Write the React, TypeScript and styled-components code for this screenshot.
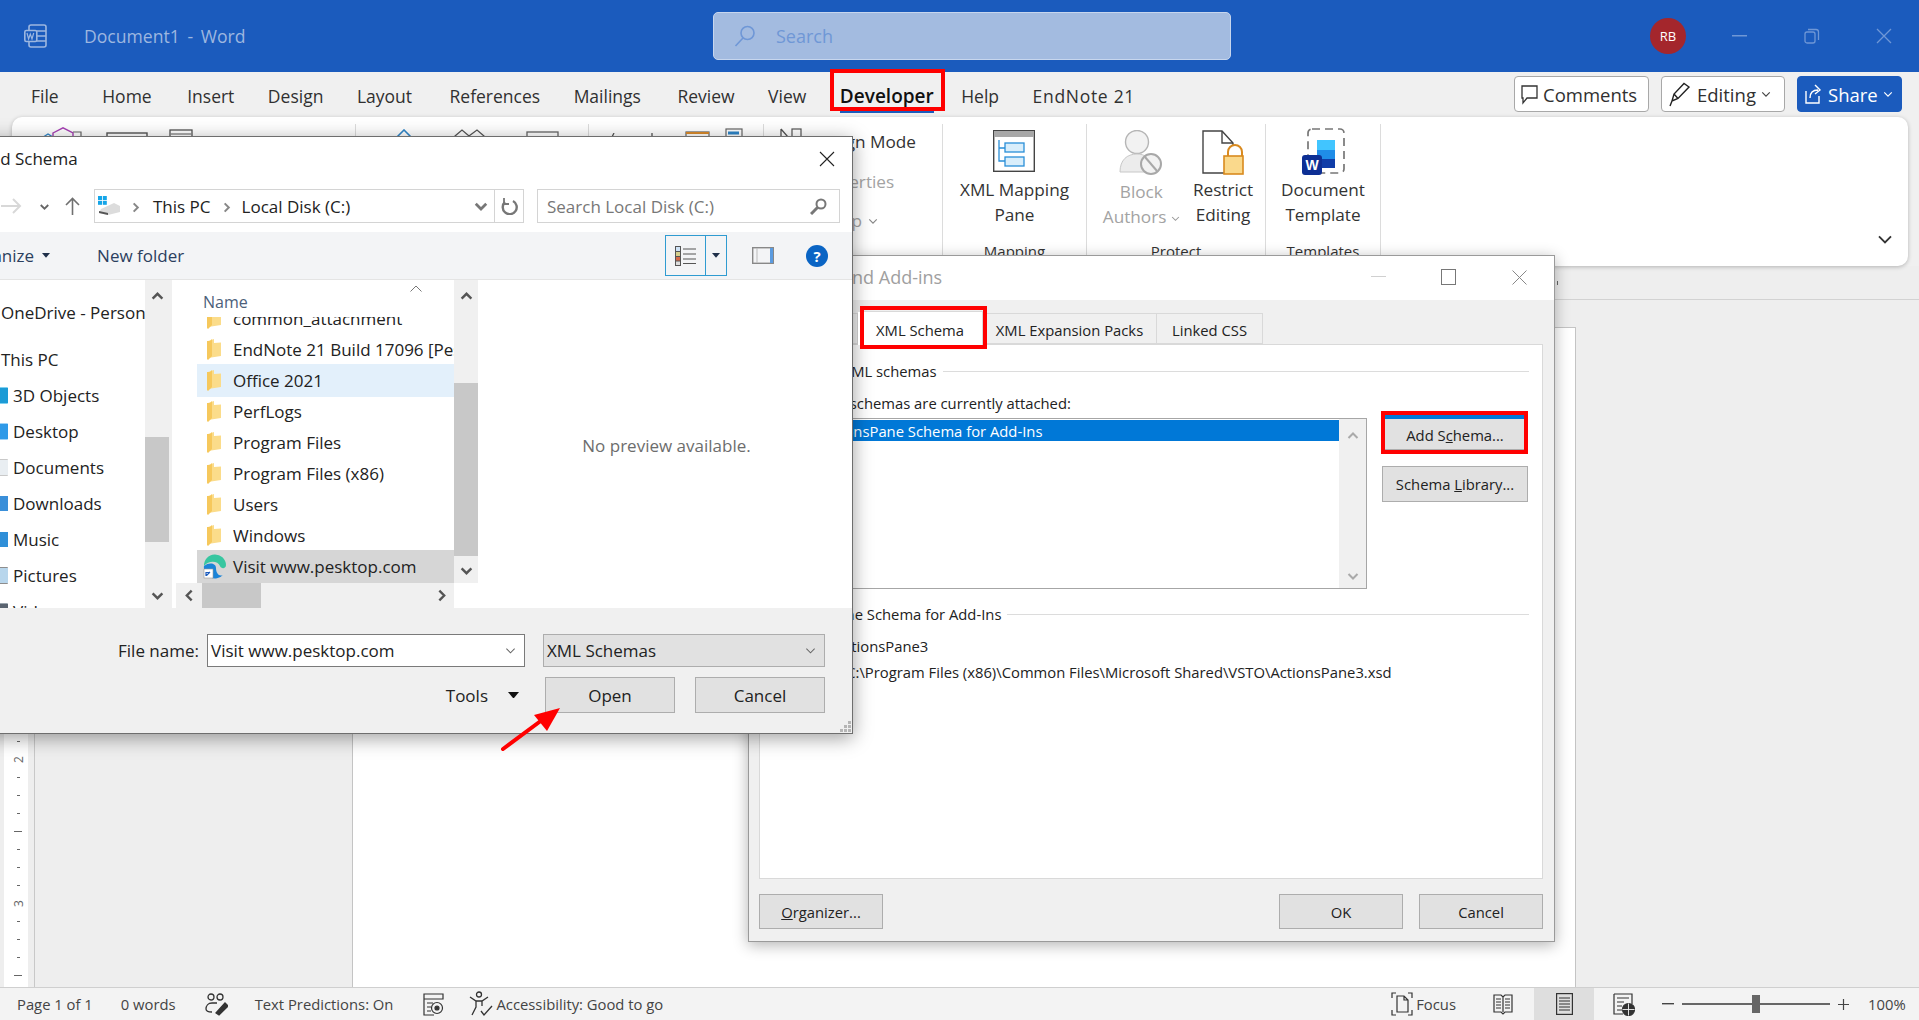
import React from "react";
import styled, { createGlobalStyle } from "styled-components";

const GlobalStyle = createGlobalStyle`
  html, body {
    margin: 0;
    padding: 0;
    background: #eeeeee;
    font-family: "Open Sans", "Noto Sans", sans-serif;
  }
  * { box-sizing: border-box; }
`;

const Screen = styled.div`
  position: relative;
  width: 1919px;
  height: 1020px;
  overflow: hidden;
  display: flex;
  flex-direction: column;
  color: #262626;
`;

/* ---------- title bar ---------- */

const TitleBar = styled.div`
  height: 72px;
  flex: none;
  background: #1b5bbd;
  display: flex;
  align-items: center;
  color: #9db7e0;
`;

const TitleLeft = styled.div`
  width: 713px;
  display: flex;
  align-items: center;
  padding-left: 24px;
  gap: 37px;
  font-size: 17.6px;
`;

const TitleText = styled.span`
  word-spacing: 3px;
`;

const SearchBox = styled.div`
  width: 518px;
  height: 48px;
  background: #a3bbe0;
  border: 1px solid #c7d6ee;
  border-radius: 5px;
  display: flex;
  align-items: center;
  padding-left: 20px;
  gap: 20px;
  font-size: 18px;
  color: #6f97d6;
`;

const TitleRight = styled.div`
  margin-left: auto;
  padding-right: 27px;
  display: flex;
  align-items: center;
`;

const Avatar = styled.div`
  width: 36px;
  height: 36px;
  border-radius: 50%;
  background: #a4262c;
  color: #fff;
  font-size: 13px;
  display: flex;
  align-items: center;
  justify-content: center;
  margin-right: 46px;
`;

const WinGlyph = styled.svg<{ $ml?: number }>`
  display: block;
  margin-left: ${(p) => p.$ml ?? 0}px;
`;

/* ---------- tabs ---------- */

const RibbonArea = styled.div`
  flex: none;
  background: #f0f0f0;
  height: 194px;
`;

const TabsBar = styled.div`
  height: 45px;
  display: flex;
  align-items: flex-start;
  padding-left: 31px;
  padding-right: 17px;
`;

const MenuTabs = styled.div`
  display: flex;
  gap: 33.5px;
  padding-top: 9px;
`;

const MenuTab = styled.div<{ $active?: boolean; $extra?: number; $track?: number }>`
  position: relative;
  height: 30px;
  line-height: 30px;
  font-size: ${(p) => (p.$active ? 19 : 17.5)}px;
  margin-right: ${(p) => p.$extra ?? 0}px;
  letter-spacing: ${(p) => p.$track ?? 0}px;
  font-weight: ${(p) => (p.$active ? 600 : 400)};
  color: ${(p) => (p.$active ? "#111" : "#303030")};
  white-space: nowrap;
  ${(p) =>
    p.$active &&
    `
    &::before {
      content: "";
      position: absolute;
      left: 0;
      right: 0;
      bottom: -2px;
      height: 3px;
      background: #1b5bbd;
    }
    &::after {
      content: "";
      position: absolute;
      left: -10px;
      right: -11px;
      top: -12px;
      bottom: 0;
      border: 4px solid #f00;
    }
  `}
`;

const ActionGroup = styled.div`
  margin-left: auto;
  display: flex;
  gap: 12px;
  padding-top: 4px;
`;

const ActionButton = styled.div<{ $w: number; $primary?: boolean }>`
  width: ${(p) => p.$w}px;
  height: 36px;
  border-radius: 4px;
  display: flex;
  align-items: center;
  padding-left: 6px;
  gap: 5px;
  font-size: 18.5px;
  background: ${(p) => (p.$primary ? "#1b5bbd" : "#fff")};
  color: ${(p) => (p.$primary ? "#fff" : "#303030")};
  border: 1px solid ${(p) => (p.$primary ? "#1b5bbd" : "#a8a8a8")};
`;

/* ---------- ribbon ---------- */

const Ribbon = styled.div`
  position: relative;
  margin: 0 11px 0 12px;
  height: 149px;
  background: #fff;
  border-radius: 10px;
  box-shadow: 0 1px 4px rgba(0, 0, 0, 0.25);
  display: flex;
  padding-top: 7px;
  font-size: 17.2px;
  color: #333;
`;

const RibbonGroup = styled.div<{ $w: number }>`
  width: ${(p) => p.$w}px;
  height: 138px;
  flex: none;
  border-right: 1px solid #dcdcdc;
  display: flex;
  flex-direction: column;
`;

const IconStrip = styled.div<{ $pl: number }>`
  display: flex;
  align-items: flex-start;
  padding-top: 3px;
  padding-left: ${(p) => p.$pl}px;
`;

const StripIcon = styled.svg<{ $ml?: number; $mt?: number }>`
  display: block;
  flex: none;
  margin-left: ${(p) => p.$ml ?? 0}px;
  margin-top: ${(p) => p.$mt ?? 0}px;
`;

const StripText = styled.span`
  margin-left: 8px;
  margin-top: 3px;
  line-height: 24px;
  white-space: nowrap;
`;

const ControlRows = styled.div`
  padding-left: 47px;
  display: flex;
  flex-direction: column;
  margin-top: 7px;
`;

const ControlRow = styled.div<{ $muted?: boolean }>`
  height: 39px;
  line-height: 39px;
  white-space: nowrap;
  display: flex;
  align-items: center;
  gap: 6px;
  color: ${(p) => (p.$muted ? "#a3a3a3" : "#333")};
`;

const LargeButtons = styled.div<{ $gap?: number; $pl?: number }>`
  display: flex;
  justify-content: center;
  gap: ${(p) => p.$gap ?? 0}px;
  padding-left: ${(p) => p.$pl ?? 0}px;
`;

const LargeButton = styled.div<{ $muted?: boolean }>`
  display: flex;
  flex-direction: column;
  align-items: center;
  text-align: center;
  line-height: 24.5px;
  white-space: nowrap;
  padding-top: 6px;
  color: ${(p) => (p.$muted ? "#a3a3a3" : "#333")};
`;

const LargeLabel = styled.div<{ $gap: number }>`
  margin-top: ${(p) => p.$gap}px;
`;

const GroupLabel = styled.div`
  margin-top: auto;
  text-align: center;
  line-height: 22px;
  font-size: 15px;
`;

const CollapseBtn = styled.div`
  position: absolute;
  right: 15px;
  bottom: 14px;
`;

/* ---------- workspace ---------- */

const Workspace = styled.div`
  flex: 1;
  min-height: 0;
  display: flex;
  flex-direction: column;
  background: #eeeeee;
`;

const HRuler = styled.div`
  height: 34px;
  flex: none;
  border-bottom: 1px solid #d2d2d2;
  display: flex;
  justify-content: flex-end;
  align-items: center;
  padding-right: 361px;
`;

const HTick = styled.div`
  width: 1px;
  height: 4px;
  background: #666;
`;

const DocRow = styled.div`
  flex: 1;
  min-height: 0;
  display: flex;
`;

const VRuler = styled.div`
  width: 24px;
  margin-left: 4px;
  background: #fff;
  display: flex;
  flex-direction: column-reverse;
  padding-bottom: 3px;
  padding-left: 4px;
  overflow: hidden;
  flex: none;
`;

const RulerMark = styled.div`
  height: 18px;
  flex: none;
  display: flex;
  align-items: center;
  justify-content: center;
  font-size: 12px;
  color: #666;
`;

const RulerDigit = styled.span`
  display: block;
  transform: rotate(-90deg);
`;

const RulerTick = styled.div<{ $long?: boolean }>`
  width: ${(p) => (p.$long ? 8 : 3)}px;
  height: 1px;
  background: #666;
`;

const PageGutter = styled.div`
  flex: 1;
  margin-left: 6px;
  border-left: 1px solid #c8c8c8;
  padding: 27px 343px 0 317px;
  display: flex;
`;

const Page = styled.div`
  flex: 1;
  background: #fff;
  border: 1px solid #c4c4c4;
  border-bottom: none;
`;

/* ---------- status bar ---------- */

const StatusBar = styled.div`
  height: 33px;
  flex: none;
  background: #f3f3f3;
  border-top: 1px solid #cfcfcf;
  display: flex;
  align-items: center;
  font-size: 14.8px;
  color: #444;
`;

const StatusItem = styled.div<{ $x: number }>`
  margin-left: ${(p) => p.$x}px;
  display: flex;
  align-items: center;
  white-space: nowrap;
  height: 100%;
`;

const StatusLabel = styled.span`
  margin-left: 3px;
`;

const StatusView = styled.div<{ $x: number; $on?: boolean }>`
  margin-left: ${(p) => p.$x}px;
  width: 60px;
  height: 100%;
  display: flex;
  align-items: center;
  justify-content: center;
  background: ${(p) => (p.$on ? "#dedede" : "transparent")};
`;

const ZoomSlider = styled.div`
  position: relative;
  width: 148px;
  height: 2px;
  background: #666;
  margin-left: 8px;
  margin-right: 8px;
`;

const ZoomThumb = styled.div`
  position: absolute;
  left: 70px;
  top: -8px;
  width: 8px;
  height: 18px;
  background: #666;
`;

/* ---------- dialogs ---------- */

const AddInsWindow = styled.div`
  position: absolute;
  left: 748px;
  top: 255px;
  width: 807px;
  height: 687px;
  background: #fff;
  border: 1px solid #9a9a9a;
  box-shadow: 0 3px 14px rgba(0, 0, 0, 0.3);
  display: flex;
  flex-direction: column;
`;

const AddInsTitle = styled.div`
  height: 44px;
  flex: none;
  display: flex;
  align-items: center;
  padding: 0 27px 2px 1px;
  font-size: 18px;
  color: #a0a0a0;
  white-space: nowrap;
`;

const TitleControls = styled.div`
  margin-left: auto;
  display: flex;
  align-items: center;
`;

const AddInsBody = styled.div`
  flex: 1;
  background: #f0f0f0;
  padding: 0 11px 0 10px;
  display: flex;
  flex-direction: column;
  font-size: 14.8px;
  color: #222;
`;

const DialogTabs = styled.div`
  height: 44px;
  flex: none;
  display: flex;
  align-items: flex-end;
`;

const DialogTab = styled.div<{ $w: number; $active?: boolean }>`
  position: relative;
  width: ${(p) => p.$w}px;
  height: ${(p) => (p.$active ? 34 : 31)}px;
  margin-bottom: ${(p) => (p.$active ? -1 : 0)}px;
  padding-top: 2px;
  z-index: ${(p) => (p.$active ? 1 : 0)};
  display: flex;
  align-items: center;
  justify-content: center;
  background: ${(p) => (p.$active ? "#fff" : "#f0f0f0")};
  border: 1px solid #d9d9d9;
  border-left: none;
  ${(p) => p.$active && "border-bottom: none;"}
  ${(p) =>
    p.$active &&
    `
    &::after {
      content: "";
      position: absolute;
      left: 2px;
      right: -5px;
      top: -6px;
      bottom: -4px;
      border: 4px solid #f00;
    }
  `}
`;

const TabPanel = styled.div`
  height: 535px;
  flex: none;
  background: #fff;
  border: 1px solid #d9d9d9;
  padding: 15px 13px 0 15px;
`;

const Legend = styled.div<{ $mt?: number; $pl?: number }>`
  display: flex;
  align-items: center;
  gap: 6px;
  height: 22px;
  white-space: nowrap;
  margin-top: ${(p) => p.$mt ?? 0}px;
  padding-left: ${(p) => p.$pl ?? 0}px;
`;

const LegendLine = styled.div`
  flex: 1;
  height: 1px;
  background: #dcdcdc;
`;

const PlainLine = styled.div<{ $mt: number; $pl?: number }>`
  height: 22px;
  line-height: 22px;
  margin-top: ${(p) => p.$mt}px;
  padding-left: ${(p) => p.$pl ?? 0}px;
  white-space: nowrap;
`;

const SchemaRow = styled.div`
  display: flex;
  margin-top: 4px;
  height: 171px;
`;

const SchemaList = styled.div`
  width: 589px;
  margin-left: 3px;
  border: 1px solid #a6a6a6;
  display: flex;
  padding-top: 1px;
  flex: none;
`;

const SchemaItems = styled.div`
  flex: 1;
`;

const SchemaItem = styled.div`
  height: 21px;
  line-height: 22px;
  background: #0078d7;
  color: #fff;
  padding-left: 40px;
  white-space: nowrap;
`;

const SchemaScroll = styled.div`
  width: 27px;
  flex: none;
  background: #f0f0f0;
  margin-top: -1px;
  display: flex;
  flex-direction: column;
  align-items: center;
  justify-content: space-between;
  padding: 11px 0 6px;
`;

const SchemaActions = styled.div`
  margin-left: 15px;
  margin-top: -3px;
  display: flex;
  flex-direction: column;
  gap: 16px;
`;

const DlgButton = styled.div<{ $w: number; $h?: number; $outlined?: boolean }>`
  position: relative;
  width: ${(p) => p.$w}px;
  height: ${(p) => p.$h ?? 35}px;
  display: flex;
  align-items: center;
  justify-content: center;
  background: #e1e1e1;
  border: 1px solid #adadad;
  color: #222;
  white-space: nowrap;
  ${(p) =>
    p.$outlined &&
    `
    border-top: 4px solid #0078d7;
    padding-top: 1px;
    &::after {
      content: "";
      position: absolute;
      left: -2px;
      right: -1px;
      top: -8px;
      bottom: -5px;
      border: 4px solid #f00;
    }
  `}
`;

const DialogFooter = styled.div`
  margin-top: 15px;
  display: flex;
  justify-content: space-between;
`;

const FooterRight = styled.div`
  display: flex;
  gap: 16px;
`;

const FileWindow = styled.div`
  position: absolute;
  left: -40px;
  top: 136px;
  width: 893px;
  height: 598px;
  background: #fff;
  border: 1px solid #6e6e6e;
  box-shadow: 0 4px 18px rgba(0, 0, 0, 0.38);
  display: flex;
  flex-direction: column;
  font-size: 17px;
  color: #222;
`;

const FileTitle = styled.div`
  height: 52px;
  flex: none;
  display: flex;
  align-items: center;
  justify-content: space-between;
  padding: 0 17px 9px 18px;
  font-size: 17px;
`;

const AddressRow = styled.div`
  height: 43px;
  flex: none;
  display: flex;
  align-items: flex-start;
  padding-left: 40px;
`;

const NavButtons = styled.div`
  width: 93px;
  height: 34px;
  display: flex;
  align-items: center;
  gap: 16px;
`;

const AddressBox = styled.div`
  width: 430px;
  height: 34px;
  border: 1px solid #d4d4d4;
  display: flex;
  align-items: center;
  padding-left: 3px;
`;

const Crumb = styled.span<{ $ml: number }>`
  margin-left: ${(p) => p.$ml}px;
  white-space: nowrap;
`;

const AddressDrop = styled.span`
  margin-left: auto;
  margin-right: 6px;
`;

const RefreshCell = styled.div`
  width: 29px;
  height: 100%;
  border-left: 1px solid #d4d4d4;
  display: flex;
  align-items: center;
  justify-content: center;
`;

const SearchField = styled.div`
  width: 303px;
  height: 34px;
  margin-left: 13px;
  border: 1px solid #d4d4d4;
  display: flex;
  align-items: center;
  justify-content: space-between;
  padding: 0 12px 0 9px;
  color: #777;
`;

const CommandBar = styled.div`
  height: 48px;
  flex: none;
  background: #f3f4f6;
  border-bottom: 1px solid #e4e4e4;
  display: flex;
  align-items: center;
  padding-left: 2px;
  color: #2b3f5e;
`;

const CommandCaret = styled.span`
  margin-left: 8px;
  display: flex;
`;

const NewFolder = styled.span`
  margin-left: 47px;
`;

const ViewSwitch = styled.div`
  width: 62px;
  height: 41px;
  margin-left: auto;
  border: 1px solid #2f9bd1;
  display: flex;
`;

const ViewCell = styled.div<{ $w: number; $split?: boolean }>`
  width: ${(p) => p.$w}px;
  display: flex;
  align-items: center;
  justify-content: center;
  ${(p) => p.$split && "border-left: 1px solid #2f9bd1;"}
`;

const PreviewToggle = styled.svg`
  margin-left: 25px;
`;

const HelpDot = styled.div`
  width: 22px;
  height: 22px;
  border-radius: 50%;
  background: #0a64c4;
  color: #fff;
  font-size: 15px;
  font-weight: 700;
  display: flex;
  align-items: center;
  justify-content: center;
  margin-left: 32px;
  margin-right: 24px;
`;

const Browser = styled.div`
  height: 328px;
  flex: none;
  display: flex;
`;

const NavPane = styled.div`
  width: 184px;
  flex: none;
  overflow: hidden;
  padding-top: 14px;
`;

const NavRow = styled.div<{ $mb?: number; $pl: number }>`
  height: 36px;
  display: flex;
  align-items: center;
  gap: 5px;
  white-space: nowrap;
  padding-left: ${(p) => p.$pl}px;
  margin-bottom: ${(p) => p.$mb ?? 0}px;
`;

const VScroll = styled.div`
  width: 24px;
  flex: none;
  background: #f0f0f0;
  display: flex;
  flex-direction: column;
  align-items: center;
`;

const ScrollThumb = styled.div<{ $mt: number; $h: number }>`
  width: 100%;
  height: ${(p) => p.$h}px;
  margin-top: ${(p) => p.$mt}px;
  background: #c8c8c8;
  flex: none;
`;

const ScrollEnd = styled.div<{ $h: number; $auto?: boolean }>`
  height: ${(p) => p.$h}px;
  flex: none;
  display: flex;
  align-items: center;
  justify-content: center;
  ${(p) => p.$auto && "margin-top: auto;"}
`;

const PaneGap = styled.div`
  width: 5px;
  flex: none;
  border-left: 3px solid #f0f0f0;
`;

const ListPane = styled.div`
  width: 307px;
  flex: none;
  display: flex;
  flex-direction: column;
`;

const ListMain = styled.div`
  height: 303px;
  flex: none;
  display: flex;
`;

const FileColumn = styled.div`
  width: 280px;
  flex: none;
  display: flex;
  flex-direction: column;
  overflow: hidden;
`;

const ColumnHead = styled.div`
  height: 37px;
  flex: none;
  display: flex;
  justify-content: space-between;
  padding: 6px 32px 0 29px;
  color: #4c607a;
  font-size: 16px;
  line-height: 32px;
  position: relative;
  z-index: 1;
  background: #fff;
`;

const SortCaret = styled.svg`
  margin-top: -1px;
`;

const FileRows = styled.div`
  flex: 1;
  margin-top: -14px;
  padding-left: 23px;
`;

const FileRow = styled.div<{ $bg?: string }>`
  height: 31px;
  display: flex;
  align-items: center;
  padding-left: 10px;
  gap: 12px;
  white-space: nowrap;
  overflow: hidden;
  background: ${(p) => p.$bg ?? "transparent"};
  box-shadow: ${(p) =>
    p.$bg ? `0 -1px 0 ${p.$bg}, 0 1px 0 ${p.$bg}` : "none"};
`;

const EdgeRowIcon = styled.svg`
  margin-left: -4px;
  margin-right: -6px;
  flex: none;
`;

const HScroll = styled.div`
  height: 25px;
  flex: none;
  margin-left: 2px;
  width: 278px;
  background: #f0f0f0;
  display: flex;
  align-items: center;
`;

const HEnd = styled.div<{ $w: number; $auto?: boolean }>`
  width: ${(p) => p.$w}px;
  height: 100%;
  display: flex;
  align-items: center;
  justify-content: center;
  ${(p) => p.$auto && "margin-left: auto;"}
`;

const HThumb = styled.div`
  width: 59px;
  height: 100%;
  background: #c8c8c8;
`;

const PreviewPane = styled.div`
  flex: 1;
  display: flex;
  align-items: center;
  justify-content: center;
  color: #6d6d6d;
  padding-top: 2px;
`;

const FileFooter = styled.div`
  position: relative;
  flex: 1;
  background: #f0f0f0;
  padding: 26px 27px 0 0;
  display: flex;
  flex-direction: column;
  align-items: flex-end;
`;

const FormRow = styled.div`
  display: flex;
  align-items: center;
`;

const FormLabel = styled.span`
  margin-right: 8px;
`;

const ComboBox = styled.div<{ $w: number; $select?: boolean }>`
  width: ${(p) => p.$w}px;
  height: 33px;
  display: flex;
  align-items: center;
  justify-content: space-between;
  padding: 0 8px 0 3px;
  background: ${(p) => (p.$select ? "#e1e1e1" : "#fff")};
  border: 1px solid ${(p) => (p.$select ? "#adadad" : "#7a7a7a")};
  margin-left: ${(p) => (p.$select ? 18 : 0)}px;
`;

const ButtonRow = styled.div`
  margin-top: 10px;
  display: flex;
  align-items: center;
  gap: 20px;
`;

const ToolsMenu = styled.div`
  display: flex;
  align-items: center;
  gap: 20px;
  margin-right: 6px;
`;

const Grip = styled.svg`
  position: absolute;
  right: 0;
  bottom: 0;
`;

const Pointer = styled.svg`
  position: absolute;
  left: 498px;
  top: 704px;
`;

/* ---------- drawings ---------- */

const Chevron = ({
  size = 12,
  color = "#555",
  width = 1.4,
  rotate = 0,
}: {
  size?: number;
  color?: string;
  width?: number;
  rotate?: number;
}) => (
  <svg
    width={size}
    height={size}
    viewBox="0 0 12 12"
    fill="none"
    style={rotate ? { transform: `rotate(${rotate}deg)` } : undefined}
  >
    <path d="M1.5 4 L6 8.5 L10.5 4" stroke={color} strokeWidth={width} />
  </svg>
);

const Caret = ({ color = "#222", size = 10 }: { color?: string; size?: number }) => (
  <svg width={size} height={size * 0.6} viewBox="0 0 10 6">
    <path d="M0 0 H10 L5 6 Z" fill={color} />
  </svg>
);

const FolderIcon = () => (
  <svg width="14" height="21" viewBox="0 0 14 21" style={{ flex: "none" }}>
    <path d="M1 2 L7 0 V4 L14 3.5 V17 L1 19 Z" fill="#fbdc8a" />
    <path d="M0 2 H3 L5 0 V17 L1 21 L0 20 Z" fill="#f6c85c" />
  </svg>
);

const NavGlyph = ({ color, light }: { color: string; light: string }) => (
  <svg width="17" height="17" viewBox="0 0 17 17" style={{ flex: "none" }}>
    <rect width="17" height="17" rx="1" fill={light} />
    <rect x="8" y="1" width="9" height="15" fill={color} />
  </svg>
);

const navItems = [
  { name: "3D Objects", color: "#1c9bd6", light: "#7fd0f0" },
  { name: "Desktop", color: "#2f9ae8", light: "#9fd2f7" },
  { name: "Documents", color: "#e9eef2", light: "#c9c9c9" },
  { name: "Downloads", color: "#3a8fd9", light: "#fff" },
  { name: "Music", color: "#2f8fd8", light: "#fff" },
  { name: "Pictures", color: "#b8d6ec", light: "#8d8d8d" },
  { name: "Videos", color: "#5a6470", light: "#9aa4ad" },
];

const files = [
  "common_attachment",
  "EndNote 21 Build 17096 [PeskTop]",
  "Office 2021",
  "PerfLogs",
  "Program Files",
  "Program Files (x86)",
  "Users",
  "Windows",
];

const menuTabs = [
  { name: "Home", extra: 2 },
  { name: "Insert", extra: 0 },
  { name: "Design", extra: 0 },
  { name: "Layout", extra: 4 },
  { name: "References", extra: 0 },
  { name: "Mailings", extra: 3 },
  { name: "Review", extra: 0 },
  { name: "View", extra: 0 },
];

const rulerMarks = Array.from({ length: 32 }, (_, i) => i);

const App = () => {
  return (
    <>
      <GlobalStyle />
      <Screen>
        <TitleBar>
          <TitleLeft>
            <svg width="23" height="24" viewBox="0 0 23 24" fill="none" stroke="#9db7e0" strokeWidth="1.6">
              <rect x="5" y="1" width="17" height="22" rx="2" />
              <path d="M13 7h9M13 12h9M13 17h9" />
              <rect x="0.8" y="6.5" width="12" height="11" rx="1.5" fill="#1b5bbd" />
              <path d="M3 9l1.6 6 1.7-5 1.7 5 1.7-6" strokeWidth="1.2" />
            </svg>
            <TitleText>Document1 - Word</TitleText>
          </TitleLeft>
          <SearchBox>
            <svg width="22" height="22" viewBox="0 0 22 22" fill="none" stroke="#6f97d6" strokeWidth="1.6">
              <circle cx="13.5" cy="8" r="6.5" />
              <path d="M9 13 L1.5 21" />
            </svg>
            Search
          </SearchBox>
          <TitleRight>
            <Avatar>RB</Avatar>
            <WinGlyph width="15" height="2" viewBox="0 0 15 2">
              <rect width="15" height="1.5" fill="#6f97d6" />
            </WinGlyph>
            <WinGlyph $ml={57} width="16" height="16" viewBox="0 0 16 16" fill="none" stroke="#6f97d6" strokeWidth="1.3">
              <rect x="1" y="4" width="10" height="11" rx="2" />
              <path d="M4 1.5 h8 a2.5 2.5 0 0 1 2.5 2.5 v8" />
            </WinGlyph>
            <WinGlyph $ml={56} width="16" height="16" viewBox="0 0 16 16" fill="none" stroke="#6f97d6" strokeWidth="1.3">
              <path d="M1 1 L15 15 M15 1 L1 15" />
            </WinGlyph>
          </TitleRight>
        </TitleBar>

        <RibbonArea>
          <TabsBar>
            <MenuTabs>
              <MenuTab $extra={10}>File</MenuTab>
              {menuTabs.map((t) => (
                <MenuTab key={t.name} $extra={t.extra}>
                  {t.name}
                </MenuTab>
              ))}
              <MenuTab $active $extra={-6}>
                Developer
              </MenuTab>
              <MenuTab>Help</MenuTab>
              <MenuTab $track={0.7}>EndNote 21</MenuTab>
            </MenuTabs>
            <ActionGroup>
              <ActionButton $w={135}>
                <svg width="17" height="21" viewBox="0 0 17 21" fill="none" stroke="#333" strokeWidth="1.3">
                  <path d="M1 2h15v12H6l-4 5v-5H1z" />
                </svg>
                Comments
              </ActionButton>
              <ActionButton $w={124}>
                <svg width="24" height="25" viewBox="0 0 24 25" fill="none" stroke="#222" strokeWidth="1.4">
                  <path d="M4 19 L6 12 L16 1.5 L21 5 L10 16.5 Z M6 12 L10 16.5 M4 19 L2 24" />
                </svg>
                Editing
                <Chevron size={10} color="#444" />
              </ActionButton>
              <ActionButton $w={105} $primary>
                <svg width="19" height="22" viewBox="0 0 19 22" fill="none" stroke="#fff" strokeWidth="1.4">
                  <path d="M2 8v12h13v-7M6 15c0-5 3-8 8-8M11 2l5 5-5 4" />
                </svg>
                Share
                <Chevron size={10} color="#fff" />
              </ActionButton>
            </ActionGroup>
          </TabsBar>

          <Ribbon>
            <RibbonGroup $w={344}>
              <IconStrip $pl={24}>
                <StripIcon width="46" height="30" viewBox="0 0 46 30" fill="none">
                  <path d="M1 14 L12 7 L23 14 V28 H1 Z" stroke="#2f86c9" strokeWidth="1.4" />
                  <path d="M17 6 L27 0.8 L37 6 V16 L27 21 L17 16 Z" stroke="#a63fb4" strokeWidth="1.4" />
                  <path d="M37 5 H45 V20" stroke="#666" strokeWidth="1.2" />
                </StripIcon>
                <StripIcon $ml={24} $mt={5} width="42" height="26" viewBox="0 0 42 26" fill="none">
                  <rect x="1" y="1" width="40" height="24" stroke="#555" strokeWidth="1.4" />
                </StripIcon>
                <StripIcon $ml={21} $mt={2} width="24" height="28" viewBox="0 0 24 28" fill="none">
                  <rect x="1" y="1" width="22" height="26" stroke="#555" strokeWidth="1.3" />
                  <path d="M1 5h22" stroke="#888" strokeWidth="1.4" />
                </StripIcon>
                <StripText>Record Macro</StripText>
              </IconStrip>
            </RibbonGroup>
            <RibbonGroup $w={233}>
              <IconStrip $pl={36}>
                <StripIcon $mt={2} width="24" height="24" viewBox="0 0 24 24" fill="none">
                  <path d="M1 12 L12 1 L23 12" stroke="#2f86c9" strokeWidth="1.6" />
                </StripIcon>
                <StripIcon $ml={38} $mt={2} width="31" height="24" viewBox="0 0 31 24" fill="none">
                  <path d="M1 7 L8 1 L15 7 L23 1 L30 7 V23 H1 Z" stroke="#555" strokeWidth="1.3" />
                </StripIcon>
                <StripIcon $ml={41} $mt={4} width="33" height="24" viewBox="0 0 33 24" fill="none">
                  <rect x="1" y="1" width="31" height="22" stroke="#666" strokeWidth="1.3" />
                </StripIcon>
              </IconStrip>
            </RibbonGroup>
            <RibbonGroup $w={175}>
              <IconStrip $pl={22}>
                <StripIcon $mt={6} width="44" height="20" viewBox="0 0 44 20" fill="none">
                  <path d="M3 0 L1 4 M41 0 V5" stroke="#555" strokeWidth="1.3" />
                </StripIcon>
                <StripIcon $ml={30} $mt={4} width="25" height="22" viewBox="0 0 25 22" fill="none">
                  <rect x="1" y="1" width="23" height="20" stroke="#666" strokeWidth="1.2" />
                  <path d="M1 2h23" stroke="#d98a2c" strokeWidth="2" />
                </StripIcon>
                <StripIcon $ml={15} $mt={1} width="22" height="24" viewBox="0 0 22 24" fill="none">
                  <rect x="1" y="1" width="16" height="20" stroke="#666" strokeWidth="1.2" />
                  <path d="M3 5h11" stroke="#2f86c9" strokeWidth="3" />
                  <path d="M17 9h4" stroke="#666" strokeWidth="1.2" />
                </StripIcon>
              </IconStrip>
            </RibbonGroup>
            <RibbonGroup $w={179}>
              <IconStrip $pl={15}>
                <StripIcon $mt={1} width="24" height="27" viewBox="0 0 24 27" fill="none">
                  <path d="M2 1 L9 9 V20 M2 1 V20" stroke="#555" strokeWidth="1.3" />
                  <rect x="13" y="1" width="9" height="12" stroke="#555" strokeWidth="1.2" />
                </StripIcon>
                <StripText>Design Mode</StripText>
              </IconStrip>
              <ControlRows>
                <ControlRow $muted>Properties</ControlRow>
                <ControlRow $muted>
                  Group <Chevron size={10} color="#888" />
                </ControlRow>
              </ControlRows>
            </RibbonGroup>
            <RibbonGroup $w={144}>
              <LargeButtons>
                <LargeButton>
                  <svg width="42" height="42" viewBox="0 0 42 42" fill="none">
                    <rect x="0.7" y="0.7" width="40.6" height="40.6" stroke="#444" strokeWidth="1.4" fill="#fff" />
                    <rect x="1" y="1" width="40" height="6" fill="#a8a8a8" />
                    <path d="M6 10 V31 H12 M6 18 H12" stroke="#2a8fd8" strokeWidth="1.3" />
                    <rect x="12" y="13" width="19" height="9" stroke="#2a8fd8" strokeWidth="1.3" fill="#d9eefb" />
                    <rect x="12" y="27" width="19" height="9" stroke="#2a8fd8" strokeWidth="1.3" fill="#d9eefb" />
                  </svg>
                  <LargeLabel $gap={6}>
                    XML Mapping
                    <br />
                    Pane
                  </LargeLabel>
                </LargeButton>
              </LargeButtons>
              <GroupLabel>Mapping</GroupLabel>
            </RibbonGroup>
            <RibbonGroup $w={179}>
              <LargeButtons $gap={13} $pl={4}>
                <LargeButton $muted>
                  <svg width="44" height="45" viewBox="0 0 44 45" fill="none">
                    <ellipse cx="18" cy="12" rx="11.5" ry="11.5" stroke="#b5b5b5" strokeWidth="1.4" fill="#f2f2f2" />
                    <path d="M1 42 C1 30 8 24 18 24 C22 24 25 25 28 27 L30 42 Z" fill="#ececec" stroke="#c8c8c8" />
                    <circle cx="32" cy="34" r="10" fill="#f2f2f2" stroke="#a8a8a8" strokeWidth="2" />
                    <path d="M26 27 L38 41" stroke="#a8a8a8" strokeWidth="2" />
                  </svg>
                  <LargeLabel $gap={5}>
                    Block
                    <br />
                    Authors <Chevron size={9} color="#999" />
                  </LargeLabel>
                </LargeButton>
                <LargeButton>
                  <svg width="42" height="45" viewBox="0 0 42 45" fill="none">
                    <path d="M1 1 H20 L31 13 V43 H1 Z" stroke="#444" strokeWidth="1.4" fill="#fff" />
                    <path d="M20 1 V13 H31" stroke="#444" strokeWidth="1.4" />
                    <path d="M26 27 V22 a7 7 0 0 1 14 0 V27" stroke="#d98a1f" strokeWidth="2" fill="#fff" />
                    <rect x="22" y="26" width="19" height="18" fill="#fad98c" stroke="#d98a1f" strokeWidth="1.6" />
                  </svg>
                  <LargeLabel $gap={3}>
                    Restrict
                    <br />
                    Editing
                  </LargeLabel>
                </LargeButton>
              </LargeButtons>
              <GroupLabel>Protect</GroupLabel>
            </RibbonGroup>
            <RibbonGroup $w={115}>
              <LargeButtons>
                <LargeButton>
                  <svg width="44" height="47" viewBox="0 0 44 47" fill="none" style={{ marginTop: -2 }}>
                    <rect x="7" y="1" width="36" height="44" rx="4" stroke="#777" strokeWidth="1.7" strokeDasharray="8 5" fill="#fff" />
                    <rect x="16" y="12" width="18" height="10" fill="#41c5ff" />
                    <rect x="16" y="22" width="18" height="9" fill="#1f8de8" />
                    <rect x="16" y="31" width="18" height="9" fill="#103da8" />
                    <rect x="1" y="27" width="20" height="20" rx="3" fill="#0d2f94" />
                    <text x="11" y="42" fill="#fff" fontFamily="Liberation Sans, sans-serif" fontSize="14" fontWeight="700" textAnchor="middle">
                      W
                    </text>
                  </svg>
                  <LargeLabel $gap={3}>
                    Document
                    <br />
                    Template
                  </LargeLabel>
                </LargeButton>
              </LargeButtons>
              <GroupLabel>Templates</GroupLabel>
            </RibbonGroup>
            <CollapseBtn>
              <Chevron size={16} color="#333" />
            </CollapseBtn>
          </Ribbon>
        </RibbonArea>

        <Workspace>
          <HRuler>
            <HTick />
          </HRuler>
          <DocRow>
            <VRuler>
              {rulerMarks.map((i) => (
                <RulerMark key={i}>
                  {i % 8 === 4 ? (
                    <RulerDigit>{3 - (i - 4) / 8}</RulerDigit>
                  ) : (
                    <RulerTick $long={i % 8 === 0} />
                  )}
                </RulerMark>
              ))}
            </VRuler>
            <PageGutter>
              <Page />
            </PageGutter>
          </DocRow>
        </Workspace>

        <StatusBar>
          <StatusItem $x={17}>Page 1 of 1</StatusItem>
          <StatusItem $x={28}>0 words</StatusItem>
          <StatusItem $x={28}>
            <svg width="24" height="24" viewBox="0 0 24 24" fill="none" stroke="#333" strokeWidth="1.3">
              <circle cx="7" cy="5" r="3" />
              <circle cx="16" cy="5" r="3" />
              <path d="M2 17c0-3 2-6 6-6h5M2 17c0 2 3 3 6 3" />
              <path d="M12 21 L21 11 L24 14 L15 23 Z" fill="#333" />
            </svg>
          </StatusItem>
          <StatusItem $x={27}>Text Predictions: On</StatusItem>
          <StatusItem $x={30}>
            <svg width="21" height="23" viewBox="0 0 21 23" fill="none" stroke="#333" strokeWidth="1.2">
              <path d="M1 1h19v5H1zM1 6v16h10M4 10h6M4 14h4M4 18h4" />
              <circle cx="14" cy="15" r="5.5" />
              <circle cx="14" cy="15" r="2" fill="#333" />
            </svg>
          </StatusItem>
          <StatusItem $x={25}>
            <svg width="24" height="26" viewBox="0 0 24 26" fill="none" stroke="#333" strokeWidth="1.3">
              <circle cx="10" cy="3.5" r="2.5" />
              <path d="M1 6 L7 10 H13 L19 6 M7 10 V16 L3 24 M13 10 V15" />
              <path d="M12 20 L15 24 L23 15" />
            </svg>
            <StatusLabel>Accessibility: Good to go</StatusLabel>
          </StatusItem>

          <StatusItem $x={728}>
            <svg width="22" height="24" viewBox="0 0 22 24" fill="none" stroke="#333" strokeWidth="1.2">
              <path d="M1 6V1h4M17 1h4v5M1 18v5h4M21 18v5h-4" />
              <path d="M6 4h7l4 4v12H6zM13 4v4h4" />
            </svg>
            <StatusLabel>Focus</StatusLabel>
          </StatusItem>
          <StatusItem $x={37}>
            <svg width="20" height="21" viewBox="0 0 20 21" fill="none" stroke="#333" strokeWidth="1.2">
              <path d="M1 1h7l2 2 2-2h7v17h-7l-2 2-2-2H1zM10 3v15M3 5h5M3 8h5M3 11h5M3 14h5M12 5h5M12 8h5M12 11h5M12 14h5" />
            </svg>
          </StatusItem>
          <StatusView $x={21} $on>
            <svg width="17" height="22" viewBox="0 0 17 22" fill="none" stroke="#333" strokeWidth="1.2">
              <rect x="0.6" y="0.6" width="15.8" height="20.8" />
              <path d="M3 5h11M3 8h11M3 11h11M3 14h11M3 17h11" />
            </svg>
          </StatusView>
          <StatusItem $x={19}>
            <svg width="22" height="23" viewBox="0 0 22 23" fill="none" stroke="#333" strokeWidth="1.2">
              <path d="M1 1h18v10M1 1v20h9M4 5h12M4 9h7M4 13h5M4 17h5" />
              <circle cx="15.5" cy="16.5" r="6" fill="#333" />
              <path d="M9.5 16.5h12M15.5 10.5v12" stroke="#f3f3f3" strokeWidth="0.9" />
            </svg>
          </StatusItem>
          <StatusItem $x={27}>
            <svg width="12" height="2" viewBox="0 0 12 2">
              <rect width="12" height="1.4" fill="#444" />
            </svg>
            <ZoomSlider>
              <ZoomThumb />
            </ZoomSlider>
            <svg width="11" height="11" viewBox="0 0 11 11" fill="none" stroke="#444" strokeWidth="1.2">
              <path d="M0 5.5h11M5.5 0v11" />
            </svg>
          </StatusItem>
          <StatusItem $x={19}>100%</StatusItem>
        </StatusBar>

        <AddInsWindow>
          <AddInsTitle>
            Templates and Add-ins
            <TitleControls>
              <WinGlyph width="15" height="2" viewBox="0 0 15 2">
                <rect width="15" height="1" fill="#d0d0d0" />
              </WinGlyph>
              <WinGlyph $ml={55} width="15" height="16" viewBox="0 0 15 16" fill="none" stroke="#777">
                <rect x="0.5" y="0.5" width="14" height="15" />
              </WinGlyph>
              <WinGlyph $ml={56} width="15" height="15" viewBox="0 0 15 15" fill="none" stroke="#888">
                <path d="M0.5 0.5 L14.5 14.5 M14.5 0.5 L0.5 14.5" />
              </WinGlyph>
            </TitleControls>
          </AddInsTitle>
          <AddInsBody>
            <DialogTabs>
              <DialogTab $w={99}>Templates</DialogTab>
              <DialogTab $w={125} $active>
                XML Schema
              </DialogTab>
              <DialogTab $w={174}>XML Expansion Packs</DialogTab>
              <DialogTab $w={106}>Linked CSS</DialogTab>
            </DialogTabs>
            <TabPanel>
              <Legend $pl={2}>
                Available XML schemas
                <LegendLine />
              </Legend>
              <PlainLine $mt={10} $pl={12}>
                Checked schemas are currently attached:
              </PlainLine>
              <SchemaRow>
                <SchemaList>
                  <SchemaItems>
                    <SchemaItem>ActionsPane Schema for Add-Ins</SchemaItem>
                  </SchemaItems>
                  <SchemaScroll>
                    <Chevron size={12} color="#aaa" width={2} rotate={180} />
                    <Chevron size={12} color="#aaa" width={2} />
                  </SchemaScroll>
                </SchemaList>
                <SchemaActions>
                  <DlgButton $w={146} $outlined>
                    <span>
                      Add S<u>c</u>hema...
                    </span>
                  </DlgButton>
                  <DlgButton $w={146} $h={36}>
                    <span>
                      Schema <u>L</u>ibrary...
                    </span>
                  </DlgButton>
                </SchemaActions>
              </SchemaRow>
              <Legend $mt={14} $pl={3}>
                ActionsPane Schema for Add-Ins
                <LegendLine />
              </Legend>
              <PlainLine $mt={10} $pl={28}>
                URI: ActionsPane3
              </PlainLine>
              <PlainLine $mt={4} $pl={32}>
                Path: C:\Program Files (x86)\Common Files\Microsoft Shared\VSTO\ActionsPane3.xsd
              </PlainLine>
            </TabPanel>
            <DialogFooter>
              <DlgButton $w={124}>
                <span>
                  <u>O</u>rganizer...
                </span>
              </DlgButton>
              <FooterRight>
                <DlgButton $w={124}>OK</DlgButton>
                <DlgButton $w={124}>Cancel</DlgButton>
              </FooterRight>
            </DialogFooter>
          </AddInsBody>
        </AddInsWindow>

        <FileWindow>
          <FileTitle>
            Add Schema
            <svg width="16" height="16" viewBox="0 0 16 16" fill="none" stroke="#222" strokeWidth="1.1">
              <path d="M1 1 L15 15 M15 1 L1 15" />
            </svg>
          </FileTitle>
          <AddressRow>
            <NavButtons>
              <svg width="21" height="16" viewBox="0 0 21 16" fill="none" stroke="#d8d8d8" strokeWidth="2">
                <path d="M0 8h19M12 1l7 7-7 7" />
              </svg>
              <svg width="9" height="9" viewBox="0 0 12 12" fill="none" stroke="#666" strokeWidth="2.4" style={{ marginLeft: 2 }}>
                <path d="M1 4 L6 9 L11 4" />
              </svg>
              <svg width="15" height="18" viewBox="0 0 15 18" fill="none" stroke="#707070" strokeWidth="1.6">
                <path d="M7.5 18V2M1 8l6.5-6.5L14 8" />
              </svg>
            </NavButtons>
            <AddressBox>
              <svg width="22" height="22" viewBox="0 0 22 22">
                <rect x="0" y="1" width="4" height="4" fill="#14a5e8" />
                <rect x="4.8" y="1" width="4" height="4" fill="#14a5e8" />
                <rect x="0" y="5.8" width="4" height="4" fill="#14a5e8" />
                <rect x="4.8" y="5.8" width="4" height="4" fill="#14a5e8" />
                <path d="M3 14 L16 8 L22 11 V17 L10 20 L1 18 Z" fill="#dcdcdc" />
                <path d="M1 16 L10 18 V20 L1 18 Z" fill="#555" />
              </svg>
              <Crumb $ml={10}>
                <Chevron size={11} color="#888" width={2.2} rotate={-90} />
              </Crumb>
              <Crumb $ml={12}>This PC</Crumb>
              <Crumb $ml={10}>
                <Chevron size={11} color="#888" width={2.2} rotate={-90} />
              </Crumb>
              <Crumb $ml={10}>Local Disk (C:)</Crumb>
              <AddressDrop>
                <Chevron size={14} color="#777" width={2.4} />
              </AddressDrop>
              <RefreshCell>
                <svg width="17" height="18" viewBox="0 0 17 18" fill="none" stroke="#777" strokeWidth="2.4">
                  <path d="M4 5 A7 7 0 1 0 12 4" />
                  <path d="M3 1 V7 H8" strokeWidth="1.8" />
                </svg>
              </RefreshCell>
            </AddressBox>
            <SearchField>
              Search Local Disk (C:)
              <svg width="17" height="17" viewBox="0 0 17 17" fill="none" stroke="#777" strokeWidth="2">
                <circle cx="11" cy="6" r="4.5" />
                <path d="M7.5 9.5 L1 16" strokeWidth="3" />
              </svg>
            </SearchField>
          </AddressRow>
          <CommandBar>
            <span>Organize</span>
            <CommandCaret>
              <Caret color="#1f2f4a" size={8} />
            </CommandCaret>
            <NewFolder>New folder</NewFolder>
            <ViewSwitch>
              <ViewCell $w={39}>
                <svg width="21" height="20" viewBox="0 0 21 20" fill="none" stroke="#555">
                  <rect x="0.5" y="0.5" width="5" height="5" fill="#cfe3f7" />
                  <rect x="0.5" y="5.5" width="5" height="5" fill="#d6cf8c" />
                  <rect x="0.5" y="10.5" width="5" height="5" fill="#d66a4a" />
                  <rect x="0.5" y="15" width="5" height="4.5" fill="#ddd" />
                  <path d="M8 3h13M8 8h13M8 13h13M8 17.5h13" />
                </svg>
              </ViewCell>
              <ViewCell $w={21} $split>
                <Caret color="#1f2f4a" size={8} />
              </ViewCell>
            </ViewSwitch>
            <PreviewToggle width="22" height="17" viewBox="0 0 22 17" fill="none">
              <rect x="0.7" y="0.7" width="20.6" height="15.6" stroke="#888" strokeWidth="1.4" />
              <rect x="18" y="1" width="3" height="15" fill="#5b9be0" />
              <path d="M5 1v15" stroke="#bbb" />
            </PreviewToggle>
            <HelpDot>?</HelpDot>
          </CommandBar>
          <Browser>
            <NavPane>
              <NavRow $pl={40} $mb={11}>
                OneDrive - Personal
              </NavRow>
              <NavRow $pl={40}>This PC</NavRow>
              {navItems.map((n) => (
                <NavRow key={n.name} $pl={30}>
                  <NavGlyph color={n.color} light={n.light} />
                  {n.name}
                </NavRow>
              ))}
            </NavPane>
            <VScroll>
              <ScrollEnd $h={32}>
                <Chevron size={13} color="#555" width={2.2} rotate={180} />
              </ScrollEnd>
              <ScrollThumb $mt={125} $h={105} />
              <ScrollEnd $h={26} $auto>
                <Chevron size={13} color="#555" width={2.2} />
              </ScrollEnd>
            </VScroll>
            <PaneGap />
            <ListPane>
              <ListMain>
                <FileColumn>
                  <ColumnHead>
                    Name
                    <SortCaret width="12" height="7" viewBox="0 0 12 7" fill="none" stroke="#777">
                      <path d="M0.5 6.5 L6 1 L11.5 6.5" />
                    </SortCaret>
                  </ColumnHead>
                  <FileRows>
                    {files.map((f) => (
                      <FileRow key={f} $bg={f === "Office 2021" ? "#e3f0fb" : undefined}>
                        <FolderIcon />
                        {f}
                      </FileRow>
                    ))}
                    <FileRow $bg="#d6d6d6">
                      <EdgeRowIcon width="24" height="25" viewBox="0 0 24 25" fill="none">
                        <path d="M1 12 A11 11 0 0 1 23 11 C23 15 18 15 17 12 C15 7 6 6 1 12 Z" fill="#37c6a0" />
                        <path d="M1 12 C6 8 13 9 13 14 C13 19 16 23 20 21 A11 11 0 0 1 1 12 Z" fill="#1b84d8" />
                        <rect x="1" y="15" width="9" height="9" fill="#fff" stroke="#999" strokeWidth="0.6" />
                        <path d="M3 22 V18.5 H7 M3.5 21.5 L7 18" stroke="#1b5bbd" strokeWidth="1.2" />
                      </EdgeRowIcon>
                      Visit www.pesktop.com
                    </FileRow>
                  </FileRows>
                </FileColumn>
                <VScroll>
                  <ScrollEnd $h={32}>
                    <Chevron size={13} color="#555" width={2.2} rotate={180} />
                  </ScrollEnd>
                  <ScrollThumb $mt={71} $h={173} />
                  <ScrollEnd $h={26} $auto>
                    <Chevron size={13} color="#555" width={2.2} />
                  </ScrollEnd>
                </VScroll>
              </ListMain>
              <HScroll>
                <HEnd $w={26}>
                  <Chevron size={13} color="#555" width={2.2} rotate={90} />
                </HEnd>
                <HThumb />
                <HEnd $w={26} $auto>
                  <Chevron size={13} color="#555" width={2.2} rotate={-90} />
                </HEnd>
              </HScroll>
            </ListPane>
            <PreviewPane>No preview available.</PreviewPane>
          </Browser>
          <FileFooter>
            <FormRow>
              <FormLabel>File name:</FormLabel>
              <ComboBox $w={318}>
                Visit www.pesktop.com
                <Chevron size={11} color="#666" width={1.1} />
              </ComboBox>
              <ComboBox $w={282} $select>
                XML Schemas
                <Chevron size={11} color="#666" width={1.1} />
              </ComboBox>
            </FormRow>
            <ButtonRow>
              <ToolsMenu>
                Tools
                <Caret color="#111" size={11} />
              </ToolsMenu>
              <DlgButton $w={130} $h={36}>
                Open
              </DlgButton>
              <DlgButton $w={130} $h={36}>
                Cancel
              </DlgButton>
            </ButtonRow>
            <Grip width="12" height="12" viewBox="0 0 12 12" fill="#b5b5b5">
              <rect x="8" y="0" width="3" height="3" />
              <rect x="4" y="4" width="3" height="3" />
              <rect x="8" y="4" width="3" height="3" />
              <rect x="0" y="8" width="3" height="3" />
              <rect x="4" y="8" width="3" height="3" />
              <rect x="8" y="8" width="3" height="3" />
            </Grip>
          </FileFooter>
        </FileWindow>

        <Pointer width="66" height="50" viewBox="0 0 66 50" fill="none">
          <path d="M5 45 L44 16" stroke="#f00" strokeWidth="4" strokeLinecap="round" />
          <path d="M62 4 L36 11 L49 27 Z" fill="#f00" />
        </Pointer>
      </Screen>
    </>
  );
};

export default App;
